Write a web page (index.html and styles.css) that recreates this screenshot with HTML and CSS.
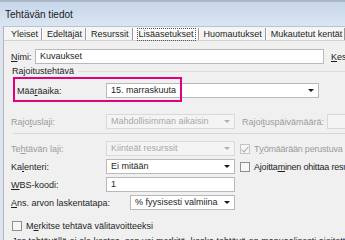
FILE: index.html
```html
<!DOCTYPE html>
<html lang="fi">

<head>
    <meta charset="UTF-8">
    <meta name="viewport" content="width=device-width, initial-scale=1.0">
    <title>Tehtävän tiedot</title>
    <link rel="stylesheet" href="styles.css">
</head>

<body>
    <div class="window">
        <div class="titlebar">Tehtävän tiedot</div>

        <div class="frame">
            <nav class="tabs">
                <span class="tab">Yleiset</span>
                <span class="tab">Edeltäjät</span>
                <span class="tab">Resurssit</span>
                <span class="tab active"><span class="focus">Lisäasetukset</span></span>
                <span class="tab">Huomautukset</span>
                <span class="tab">Mukautetut kentät</span>
            </nav>

            <section class="panel">
                <div class="row name-row">
                    <label class="lbl-name"><u>N</u>imi:</label>
                    <div class="input wide">Kuvaukset</div>
                    <label class="lbl-kesto"><u>K</u>esto:</label>
                </div>

                <div class="group-title">
                    <span>Rajoitustehtävä</span>
                    <span class="line"></span>
                </div>

                <div class="row deadline-row">
                    <label class="lbl">Mää<u>r</u>äaika:</label>
                    <div class="select long">15. marraskuuta<span class="arrow"></span></div>
                    <div class="highlight"></div>
                </div>

                <div class="row constraint-row">
                    <label class="lbl disabled">Rajo<u>t</u>uslaji:</label>
                    <div class="select mid off">Mahdollisimman aikaisin<span class="arrow"></span></div>
                    <label class="side disabled">Rajoi<u>t</u>uspäivämäärä:</label>
                    <div class="input stub off"></div>
                </div>

                <div class="separator"></div>

                <div class="row">
                    <label class="lbl disabled">Te<u>h</u>tävän laji:</label>
                    <div class="select mid off">Kiinteät resurssit<span class="arrow"></span></div>
                    <label class="check disabled"><span class="box checked"></span>T<u>y</u>ömäärään perustuva</label>
                </div>

                <div class="row">
                    <label class="lbl">Ka<u>l</u>enteri:</label>
                    <div class="select mid">Ei mitään<span class="arrow"></span></div>
                    <label class="check"><span class="box"></span>Ajoitta<u>m</u>inen ohittaa resurssikalenterit</label>
                </div>

                <div class="row">
                    <label class="lbl"><u>W</u>BS-koodi:</label>
                    <div class="input mid">1</div>
                </div>

                <div class="row">
                    <label class="lbl lbl-long"><u>A</u>ns. arvon laskentatapa:</label>
                    <div class="select short">% fyysisesti valmiina<span class="arrow"></span></div>
                </div>

                <label class="check milestone"><span class="box"></span>M<u>e</u>rkitse tehtävä välitavoitteeksi</label>

                <p class="note">Jos tehtävällä ei ole kestoa, sen voi merkitä, koska tehtävä on manuaalisesti ajoitettu.</p>
            </section>
        </div>
    </div>
</body>

</html>
```

FILE: styles.css
```css
body {
    margin: 0;
    font-family: 'Liberation Sans', Arial, sans-serif;
    font-size: 9px;
    color: #1e1e1e;
    background: #dbe4f0;
    overflow: hidden;
}

.window {
    width: 345px;
    height: 240px;
    overflow: hidden;
}

.titlebar {
    height: 24px;
    line-height: 25px;
    padding-left: 5px;
    font-size: 10px;
    color: #1a1a1a;
    border-top: 2px solid #aab5c3;
    background: linear-gradient(#c7d6ea, #dbe5f2);
}

.frame {
    margin-left: 3px;
    background: #f0f0f0;
    border-left: 1px solid #b4b4b4;
    border-top: 1px solid #b9c3d0;
}

.tabs {
    display: flex;
    height: 13px;
    padding-left: 3px;
    background: #f5f5f5;
    border-bottom: 1px solid #d2d2d2;
    white-space: nowrap;
}

.tab {
    display: flex;
    align-items: center;
    padding: 0 3px 0 4px;
    border-right: 1px solid #9a9a9a;
    box-shadow: 1px 0 0 #fff;
    margin: 1px 1px 0 0;
    line-height: 11px;
    flex-shrink: 0;
}

.tab:last-child {
    padding-right: 2px;
}

.tab.active {
    background: #fbfbfb;
}

.focus {
    outline: 1px dotted #555;
    outline-offset: 0;
    padding: 0 1px;
}

.panel {
    position: relative;
    padding: 8px 0 0 7px;
    height: 200px;
}

.row {
    position: relative;
    display: flex;
    align-items: center;
    height: 15px;
    margin-bottom: 3px;
    white-space: nowrap;
}

.lbl {
    width: 95px;
    flex-shrink: 0;
}

.lbl-long {
    width: 119px;
}

.lbl-name {
    width: 24px;
    flex-shrink: 0;
}

.lbl-kesto {
    margin-left: 7px;
    white-space: nowrap;
}

.disabled {
    color: #9c9c9c;
}

.input,
.select {
    position: relative;
    box-sizing: border-box;
    height: 15px;
    line-height: 13px;
    padding-left: 4px;
    background: #fff;
    border: 1px solid #b7b9bd;
    white-space: nowrap;
    overflow: hidden;
    flex-shrink: 0;
}

.off {
    background: #f4f4f4;
    border-color: #d9d9d9;
    color: #a8a8a8;
}

.wide {
    width: 289px;
}

.long {
    width: 213px;
}

.mid {
    width: 129px;
}

.short {
    width: 105px;
}

.stub {
    width: 30px;
    margin-left: 3px;
}

.arrow {
    position: absolute;
    right: 4px;
    top: 5px;
    border-left: 3px solid transparent;
    border-right: 3px solid transparent;
    border-top: 3px solid #1a1a1a;
}

.off .arrow {
    border-top-color: #b0b0b0;
}

.side {
    margin-left: 7px;
    flex-shrink: 0;
}

.group-title {
    display: flex;
    align-items: center;
    height: 12px;
    margin: 1px 0 0 1px;
}

.group-title .line {
    flex: 1;
    height: 1px;
    margin-left: 4px;
    background: #dcdcdc;
}

.name-row {
    margin-bottom: 1px;
}

.deadline-row {
    margin: 6px 0 0 0;
}

.deadline-row .lbl {
    padding-left: 6px;
    width: 89px;
}

.highlight {
    position: absolute;
    left: 2px;
    top: -6px;
    width: 165px;
    height: 21px;
    border: 2px solid #e3007d;
}

.constraint-row {
    margin-top: 16px;
}

.separator {
    height: 1px;
    margin: 4px 0 7px 2px;
    background: #d8d8d8;
}

.check {
    display: flex;
    align-items: center;
    margin-left: 5px;
    white-space: nowrap;
    letter-spacing: -0.2px;
}

.box {
    position: relative;
    box-sizing: border-box;
    width: 10px;
    height: 10px;
    margin-right: 4px;
    background: #f6f6f6;
    border: 1px solid #8f8f8f;
    flex-shrink: 0;
}

.disabled .box {
    border-color: #c4c4c4;
}

.box.checked::after {
    content: "";
    position: absolute;
    left: 2px;
    top: 0;
    width: 3px;
    height: 6px;
    border-right: 1px solid #a8a8a8;
    border-bottom: 1px solid #a8a8a8;
    transform: rotate(40deg);
}

.milestone {
    margin: 11px 0 0 1px;
    letter-spacing: 0;
}

.note {
    margin: 5px 0 0 1px;
    white-space: nowrap;
}
```
